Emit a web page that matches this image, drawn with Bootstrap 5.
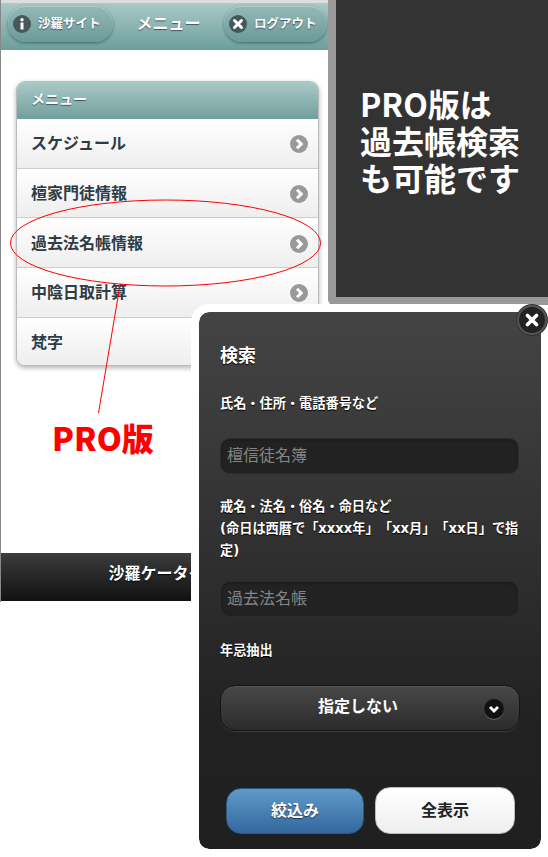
<!DOCTYPE html>
<html lang="ja">
<head>
<meta charset="utf-8">
<title>メニュー</title>
<link href="https://cdn.jsdelivr.net/npm/bootstrap@5.3.0/dist/css/bootstrap.min.css" rel="stylesheet">
<style>
html,body{margin:0;background:#fff;}
body{width:548px;height:857px;overflow:hidden;position:relative;font-family:"Liberation Sans","Noto Sans CJK JP",sans-serif;}
.phone{width:328px;height:602px;border-left:1px solid #888;display:flex;flex-direction:column;background:#fff;}
.topbar{height:50px;flex:none;border-top:3px solid #ddd;background:linear-gradient(#a9cac7,#6e9e9b);padding:3px 1px 0 7px;display:flex;align-items:flex-start;justify-content:space-between;}
.topbtn{height:36px;border-radius:18px;background:linear-gradient(#93b9b6,#6c9a98);box-shadow:0 1px 3px rgba(0,60,60,.55),inset 0 1px 0 rgba(255,255,255,.3);display:flex;align-items:center;gap:7px;padding:0 0 0 5px;color:#fff;font-size:12.500px;font-weight:700;text-shadow:0 1px 1px #456;white-space:nowrap;}
.topbtn-a{width:105px;}
.topbtn-b{width:103px;}
.toptitle{color:#fff;font-size:16px;font-weight:700;line-height:36px;text-shadow:0 1px 1px #456;}
.mainarea{flex:1;padding:31px 9px 0 15px;}
.menucard{border:1px solid #bbb;border-radius:9px;box-shadow:0 2px 5px rgba(0,0,0,.3);overflow:hidden;}
.menuhead{height:37px;background:linear-gradient(#a9cac7,#719f9d);color:#fff;font-size:14px;font-weight:700;padding:0 14px;line-height:35px;text-shadow:0 1px 1px #456;border:0;border-radius:0;}
.menuitem{height:49.700px;display:flex;align-items:center;justify-content:space-between;padding:2px 10px 0 14px;background:linear-gradient(#fff,#eee);color:#2f3c44;font-size:16px;font-weight:700;border:0;border-bottom:1px solid #ccc;}
.menuitem:last-child{border-bottom:0;height:47.500px;}
.footbar{height:48px;flex:none;background:linear-gradient(#3c3c3c,#111);color:#fff;font-size:16px;font-weight:700;text-align:center;line-height:42px;text-shadow:0 1px 1px #000;margin-bottom:1px;white-space:nowrap;overflow:hidden;}
.notepanel{position:absolute;left:328px;top:0;width:220px;height:305px;background:#333;border-left:8px solid #999;border-bottom:8px solid #999;border-bottom-left-radius:6px;color:#fff;font-size:32px;font-weight:700;line-height:37px;padding:85px 0 0 24px;font-family:"Noto Sans CJK JP",sans-serif;white-space:nowrap;}
.redmark{position:absolute;left:0;top:0;pointer-events:none;}
.protext{position:absolute;left:52px;top:413px;color:#f00;font-size:32px;font-weight:900;line-height:48px;font-family:"Noto Sans CJK JP",sans-serif;}
.popup{position:absolute;left:191px;top:304px;width:358px;height:553px;border:8px solid #fff;border-radius:18px;background:linear-gradient(#444,#222 75%,#1f1f1f);background-clip:padding-box;padding:32px 21px 0;color:#fff;display:flex;flex-direction:column;}
.closebtn{position:absolute;right:-6px;top:-7px;width:30px;height:30px;border-radius:50%;background:#222;border:2px solid #555;box-shadow:0 0 0 1px #333;display:flex;align-items:center;justify-content:center;}
.poptitle{font-size:18px;font-weight:700;line-height:24px;margin:0 0 25px;text-shadow:0 1px 1px #000;}
.poplabel{font-family:"DejaVu Sans","Noto Sans CJK JP",sans-serif;font-size:13.200px;font-weight:700;line-height:22px;margin:0;text-shadow:0 1px 1px #000;text-spacing-trim:space-all;font-kerning:none;}
.gap-a{margin-top:23px;}
.gap-b{margin-top:22px;}
.gap-c{margin-top:19px;}
.gap-e{margin-top:23px;}
.gap-d{margin-top:23px;}
.popinput.form-control{background:#222;border:1px solid #2d2d2d;border-radius:10px;height:36px;width:299px;padding:0 6px;font-size:16px;color:#ddd;box-shadow:inset 0 1px 3px rgba(0,0,0,.3);}
.popinput.form-control::placeholder{color:#858585;opacity:1;}
.popselect{height:46px;width:300px;flex:none;border-radius:15px;background:linear-gradient(#484848,#2b2b2b);border:1px solid #151515;box-shadow:0 1px 0 #3a3a3a,inset 0 1px 0 #555;position:relative;display:flex;align-items:center;justify-content:center;color:#fff;font-size:16px;font-weight:700;padding:0 24px 3px 0;}
.selchev{position:absolute;right:15px;top:13px;width:20px;height:20px;border-radius:50%;background:#111;box-shadow:0 1px 0 #666;display:flex;align-items:center;justify-content:center;}
.popactions{display:flex;gap:11px;padding:56px 0 0 6px;align-items:flex-end;}
.popactions .btn{height:46px;border-radius:15px;font-size:16px;font-weight:700;padding:0;}
.btn-narrow{width:138px;background:linear-gradient(#5f9aca,#33689c);border:1px solid #2b5a85;color:#fff;text-shadow:0 1px 1px #234;}
.btn-all{width:140px;height:47px!important;background:linear-gradient(#fff,#eee);border:1px solid #bbb;color:#222;}
</style>
</head>
<body>
<div class="phone">
  <div class="topbar">
    <div class="topbtn topbtn-a">
      <svg width="18" height="18" viewBox="0 0 18 18"><circle cx="9" cy="9" r="9" fill="#45585a"/><rect x="7.500" y="7.500" width="3" height="7" rx=".5" fill="#fff"/><circle cx="9" cy="4.800" r="1.700" fill="#fff"/></svg>
      <span>沙羅サイト</span>
    </div>
    <div class="toptitle">メニュー</div>
    <div class="topbtn topbtn-b">
      <svg width="18" height="18" viewBox="0 0 18 18"><circle cx="9" cy="9" r="9" fill="#45585a"/><path d="M5.500 5.500l7 7M12.500 5.500l-7 7" stroke="#fff" stroke-width="3" stroke-linecap="round"/></svg>
      <span>ログアウト</span>
    </div>
  </div>
  <div class="mainarea">
    <div class="card menucard">
      <div class="card-header menuhead">メニュー</div>
      <div class="list-group list-group-flush">
        <div class="menuitem">スケジュール<svg width="18" height="18" viewBox="0 0 18 18"><use href="#arrowR"/></svg></div>
        <div class="menuitem">檀家門徒情報<svg width="18" height="18" viewBox="0 0 18 18"><use href="#arrowR"/></svg></div>
        <div class="menuitem">過去法名帳情報<svg width="18" height="18" viewBox="0 0 18 18"><use href="#arrowR"/></svg></div>
        <div class="menuitem">中陰日取計算<svg width="18" height="18" viewBox="0 0 18 18"><use href="#arrowR"/></svg></div>
        <div class="menuitem">梵字</div>
      </div>
    </div>
  </div>
  <div class="footbar">沙羅ケータイ版</div>
</div>

<svg width="0" height="0" class="position-absolute"><defs><g id="arrowR"><circle cx="9" cy="9" r="9" fill="#999"/><path d="M7 4.800L11.200 9 7 13.200" fill="none" stroke="#fff" stroke-width="3"/></g></defs></svg>

<svg class="redmark" width="330" height="420" viewBox="0 0 330 420">
  <ellipse cx="165.500" cy="243" rx="155" ry="43" fill="none" stroke="#f00" stroke-width="1"/>
  <line x1="120" y1="285" x2="98.500" y2="413" stroke="#f00" stroke-width="1"/>
</svg>
<div class="protext">PRO版</div>

<div class="notepanel">PRO版は<br>過去帳検索<br>も可能です</div>

<div class="popup">
  <div class="closebtn"><svg width="14" height="14" viewBox="0 0 14 14"><path d="M2.500 2.500l9 9M11.500 2.500l-9 9" stroke="#fff" stroke-width="3.600" stroke-linecap="round"/></svg></div>
  <div class="poptitle">検索</div>
  <p class="poplabel">氏名・住所・電話番号など</p>
  <input class="form-control popinput gap-a" placeholder="檀信徒名簿">
  <p class="poplabel gap-b">戒名・法名・俗名・命日など<br>(命日は西暦で「xxxx年」「xx月」「xx日」で指定)</p>
  <input class="form-control popinput gap-c" placeholder="過去法名帳">
  <p class="poplabel gap-e">年忌抽出</p>
  <div class="popselect gap-d">指定しない
    <span class="selchev"><svg width="12" height="12" viewBox="0 0 12 12"><path d="M2 4l4 4 4-4" fill="none" stroke="#fff" stroke-width="2.800"/></svg></span>
  </div>
  <div class="popactions">
    <button class="btn btn-narrow">絞込み</button>
    <button class="btn btn-all">全表示</button>
  </div>
</div>
<script src="https://cdn.jsdelivr.net/npm/bootstrap@5.3.0/dist/js/bootstrap.bundle.min.js"></script>
</body>
</html>
